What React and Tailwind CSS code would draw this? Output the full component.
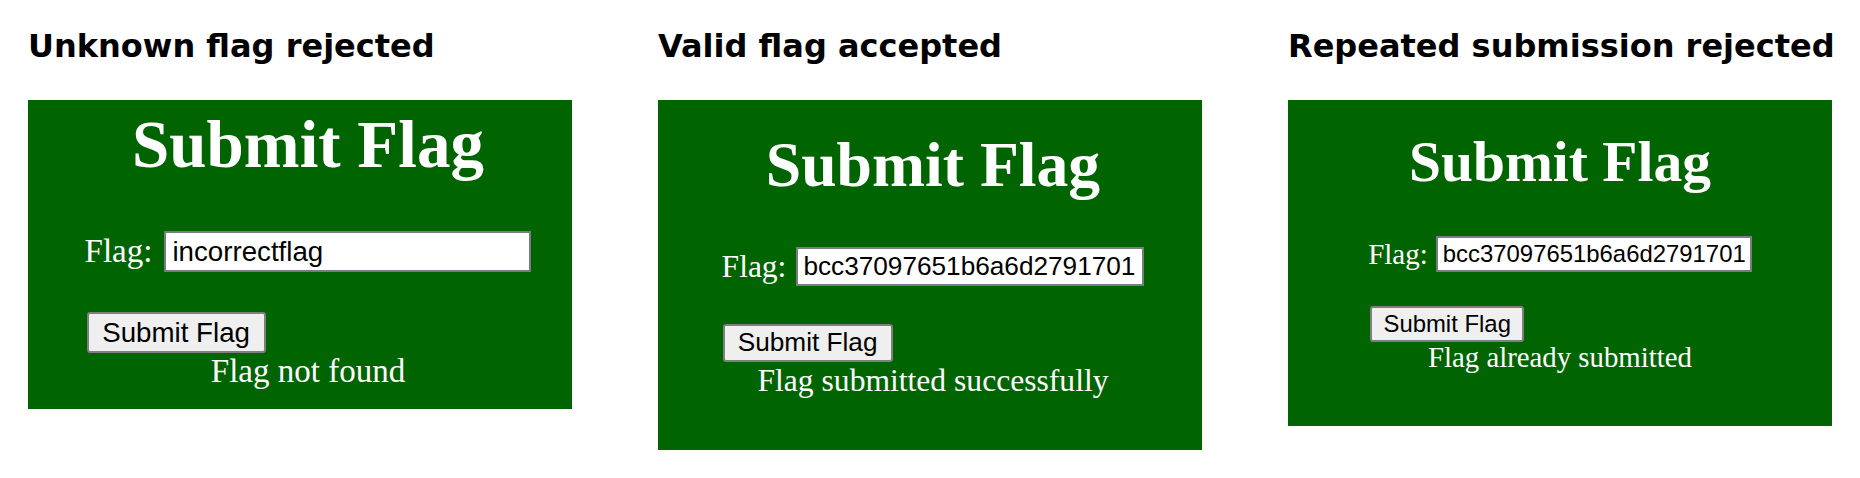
import React from 'react'

// three captured states of the flag form, each at its own capture scale
const shots = [
  {
    title: 'Unknown flag rejected',
    value: 'incorrectflag',
    message: 'Flag not found',
    box: 'h-[309px] pt-[11px] pl-[16px]',
    heading: 'text-[67px] leading-[66px]',
    row: 'mt-[54px] h-[41px]',
    label: 'text-[33px] leading-[41px]',
    input: 'ml-[12px] w-[367px] h-[41px] text-[27.7px] px-[6px]',
    button: 'mt-[40px] ml-[2px] w-[179px] h-[41px] text-[27.7px]',
    note: 'mt-[2px] text-[33px] leading-[33px]',
  },
  {
    title: 'Valid flag accepted',
    value: 'bcc37097651b6a6d2791701',
    message: 'Flag submitted successfully',
    box: 'h-[350px] pt-[33px] pl-[6px]',
    heading: 'text-[63.7px] leading-[63px]',
    row: 'mt-[51px] h-[39px]',
    label: 'text-[31.5px] leading-[39px]',
    input: 'ml-[10px] w-[348px] h-[39px] text-[26.2px] px-[5px]',
    button: 'mt-[38px] ml-[1px] w-[170px] h-[38px] text-[26.2px]',
    note: 'mt-[2.5px] text-[31.6px] leading-[31.6px]',
  },
  {
    title: 'Repeated submission rejected',
    value: 'bcc37097651b6a6d2791701',
    message: 'Flag already submitted',
    box: 'h-[326px] pt-[33px]',
    heading: 'text-[57.5px] leading-[57px]',
    row: 'mt-[46px] h-[36px]',
    label: 'text-[29px] leading-[36px]',
    input: 'ml-[8px] w-[316px] h-[36px] text-[23.9px] px-[5px]',
    button: 'mt-[34px] ml-[2px] w-[154px] h-[36px] text-[23.9px]',
    note: 'mt-[1px] text-[28.8px] leading-[28.8px]',
  },
]

function FlagShot({ shot }) {
  return (
    <div className="flex flex-col w-[544px]">
      <h2 className="font-['DejaVu_Sans',sans-serif] font-bold text-black text-[32px] leading-[31px] whitespace-nowrap">
        {shot.title}
      </h2>
      <div className={`mt-[38px] w-[544px] bg-[#006400] text-white font-['Liberation_Serif',serif] flex flex-col items-center ${shot.box}`}>
        <h1 className={`font-bold whitespace-nowrap ${shot.heading}`}>Submit Flag</h1>
        <div className="flex flex-col items-start">
          <div className={`flex items-center ${shot.row}`}>
            <label className={shot.label}>Flag:</label>
            <input
              readOnly
              value={shot.value}
              className={`bg-white text-black border-2 border-[#7b7b85] font-['Liberation_Sans',sans-serif] outline-none ${shot.input}`}
            />
          </div>
          <button
            type="button"
            className={`bg-[#efefef] text-black border-2 border-[#7f7f7f] rounded-[3px] font-['Liberation_Sans',sans-serif] flex items-center justify-center ${shot.button}`}
          >
            Submit Flag
          </button>
        </div>
        <p className={`whitespace-nowrap ${shot.note}`}>{shot.message}</p>
      </div>
    </div>
  )
}

export default function App() {
  return (
    <div className="w-[1860px] h-[478px] overflow-hidden bg-white">
      <div className="flex items-start gap-[86px] pl-[28px] pt-[31px]">
        {shots.map((shot) => (
          <FlagShot key={shot.title} shot={shot} />
        ))}
      </div>
    </div>
  )
}
